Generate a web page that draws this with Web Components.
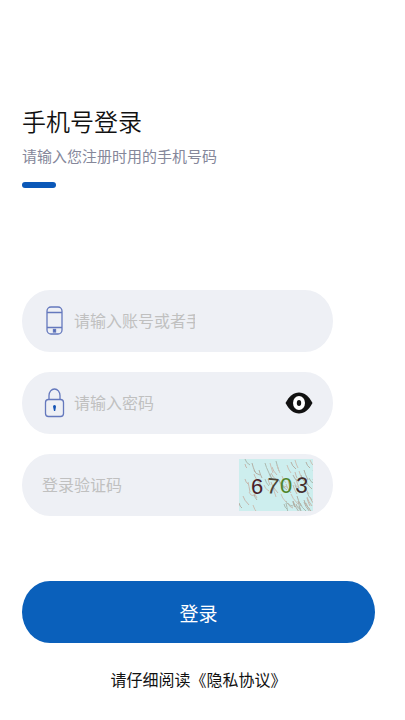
<!DOCTYPE html>
<html lang="zh-CN">
<head>
<meta charset="utf-8">
<meta name="viewport" content="width=device-width, initial-scale=1">
<title>手机号登录</title>
<style>
  body {
    margin: 0;
    background: #fff;
    color: #111;
    font-family: "Liberation Sans", "Noto Sans CJK SC", sans-serif;
    font-size: 16px;
  }
</style>
</head>
<body>
<login-page></login-page>

<script>
class LoginHeading extends HTMLElement {
  constructor() {
    super();
    const template = document.createElement('template');
    template.innerHTML = `
      <style>
        :host {
          display: block;
        }

        h1 {
          margin: 0;
          font-size: 24px;
          line-height: 36px;
          font-weight: 350;
        }

        p {
          margin: 0;
          color: #85879a;
          font-size: 15px;
          line-height: 32px;
        }

        .bar {
          width: 34px;
          height: 6px;
          margin-top: 9px;
          border-radius: 3px;
          background: #0b58b8;
        }
      </style>
      <h1><slot></slot></h1>
      <p><slot name="hint"></slot></p>
      <div class="bar"></div>
    `;
    this.attachShadow({ mode: 'open' });
    this.shadowRoot.appendChild(template.content.cloneNode(true));
  }
}

class LoginField extends HTMLElement {
  constructor() {
    super();
    const template = document.createElement('template');
    template.innerHTML = `
      <style>
        :host {
          display: flex;
          align-items: center;
          justify-content: space-between;
          height: 62px;
          padding: 0 20px;
          border-radius: 28px / 31px;
          background: #eef0f5;
        }

        label {
          display: flex;
          align-items: center;
        }

        input {
          width: 121px;
          height: 32px;
          padding: 2px 0 0;
          border: 0;
          outline: none;
          background: none;
          color: #111;
          font: inherit;
        }

        input::placeholder {
          color: #c0c0c0;
          opacity: 1;
        }
      </style>
      <label><slot name="icon"></slot><input></label>
      <slot name="action"></slot>
    `;
    this.attachShadow({ mode: 'open' });
    this.shadowRoot.appendChild(template.content.cloneNode(true));
  }

  connectedCallback() {
    const input = this.shadowRoot.querySelector('input');
    input.type = this.getAttribute('type') || 'text';
    input.placeholder = this.getAttribute('placeholder') || '';
    input.setAttribute('aria-label', input.placeholder);
  }

  toggleType() {
    const input = this.shadowRoot.querySelector('input');
    input.type = input.type === 'password' ? 'text' : 'password';
  }
}

const icons = {
  phone: `
    <rect x="5" y="2" width="15" height="27" rx="4"/>
    <path d="M5 7.5H20M5 22.5H20"/>
    <rect x="11.5" y="24.5" width="2" height="2.5" fill="#1c4ca8"/>
  `,
  lock: `
    <path d="M7 12.5V8.5a5.5 6.5 0 0 1 11 0v4"/>
    <rect x="3.5" y="12.5" width="18" height="17" rx="3"/>
    <path d="M11 19.5a1.5 1.5 0 0 1 3 0l-.8 4.5h-1.2z" fill="#1453b5" stroke="none"/>
  `
};

class FieldIcon extends HTMLElement {
  constructor() {
    super();
    this.attachShadow({ mode: 'open' });
  }

  connectedCallback() {
    this.shadowRoot.innerHTML = `
      <style>
        :host {
          display: block;
          width: 32px;
          height: 32px;
        }

        svg {
          display: block;
          fill: none;
          stroke: #6478bd;
          stroke-width: 1.3;
        }
      </style>
      <svg width="32" height="32" viewBox="0 0 32 32" aria-hidden="true">
        ${icons[this.getAttribute('name')]}
      </svg>
    `;
  }
}

class EyeToggle extends HTMLElement {
  constructor() {
    super();
    const template = document.createElement('template');
    template.innerHTML = `
      <style>
        :host {
          display: block;
        }

        button {
          display: block;
          padding: 0;
          border: 0;
          background: none;
          cursor: pointer;
        }

        svg {
          display: block;
        }
      </style>
      <button type="button" aria-label="显示密码">
        <svg width="28" height="24" viewBox="0 0 28 24">
          <path d="M.5 12C4 5.500 8.500 1.500 14 1.500S24 5.500 27.500 12C24 18.500 19.500 22.500 14 22.500S4 18.500 .5 12z" fill="#111"/>
          <ellipse cx="14" cy="12" rx="6" ry="7" fill="#fff"/>
          <ellipse cx="14" cy="12" rx="2.2" ry="3" fill="#111"/>
        </svg>
      </button>
    `;
    this.attachShadow({ mode: 'open' });
    this.shadowRoot.appendChild(template.content.cloneNode(true));
  }

  connectedCallback() {
    this.shadowRoot.querySelector('button').addEventListener('click', () => {
      this.closest('login-field').toggleType();
    });
  }
}

class CaptchaImage extends HTMLElement {
  constructor() {
    super();
    // slanted scratches scattered behind the digits, same seed every time
    let noise = '';
    let seed = 7;
    const random = () => {
      seed = (seed * 16807) % 2147483647;
      return seed / 2147483647;
    };
    const colors = ['#b3b0a5', '#c6b8ae', '#abbab0', '#cbc0b5'];
    for (let i = 0; i < 75; i++) {
      const x = Math.round(random() * 74);
      const y = Math.round(random() * 48);
      const dx = 2 + Math.round(random() * 5);
      const dy = 4 + Math.round(random() * 7);
      noise += `<path d="M${x} ${y}q1 4 ${dx} ${dy}" stroke="${colors[i % 4]}"/>`;
    }
    const template = document.createElement('template');
    template.innerHTML = `
      <style>
        :host {
          display: block;
        }

        button {
          display: block;
          padding: 0;
          border: 0;
          background: none;
          cursor: pointer;
        }

        svg {
          display: block;
          background: #cdeeee;
        }

        text {
          font-family: "Liberation Sans", sans-serif;
          font-size: 22px;
        }
      </style>
      <button type="button" aria-label="刷新验证码">
        <svg width="74" height="52" viewBox="0 0 74 52">
          <g fill="none" stroke-width="1">${noise}</g>
          <text x="12" y="35" fill="#4b2028">6</text>
          <text x="27" y="34" rotate="6" fill="#4c4436">7</text>
          <text x="41" y="34" fill="#4f8428">0</text>
          <text x="56" y="33" rotate="6" fill="#432b2b">3</text>
        </svg>
      </button>
    `;
    this.attachShadow({ mode: 'open' });
    this.shadowRoot.appendChild(template.content.cloneNode(true));
  }
}

class LoginButton extends HTMLElement {
  constructor() {
    super();
    const template = document.createElement('template');
    template.innerHTML = `
      <style>
        :host {
          display: block;
        }

        button {
          display: block;
          width: 100%;
          height: 62px;
          padding: 0;
          border: 0;
          border-radius: 28px / 31px;
          background: #0a60bb;
          color: #fff;
          font: inherit;
          font-size: 19px;
          cursor: pointer;
        }
      </style>
      <button type="button"><slot></slot></button>
    `;
    this.attachShadow({ mode: 'open' });
    this.shadowRoot.appendChild(template.content.cloneNode(true));
  }
}

class LoginPage extends HTMLElement {
  constructor() {
    super();
    const template = document.createElement('template');
    template.innerHTML = `
      <style>
        :host {
          display: block;
          padding: 105px 30px 24px 22px;
        }

        .fields {
          display: grid;
          gap: 20px;
          margin: 102px 42px 65px 0;
        }

        .agreement {
          margin: 26px 0 0;
          line-height: 24px;
          text-align: center;
        }

        a {
          color: inherit;
          text-decoration: none;
        }
      </style>
      <login-heading>手机号登录<span slot="hint">请输入您注册时用的手机号码</span></login-heading>
      <div class="fields">
        <login-field placeholder="请输入账号或者手机号">
          <field-icon slot="icon" name="phone"></field-icon>
        </login-field>
        <login-field type="password" placeholder="请输入密码">
          <field-icon slot="icon" name="lock"></field-icon>
          <eye-toggle slot="action"></eye-toggle>
        </login-field>
        <login-field placeholder="登录验证码">
          <captcha-image slot="action"></captcha-image>
        </login-field>
      </div>
      <login-button>登录</login-button>
      <p class="agreement">请仔细阅读<a href="#privacy">《隐私协议》</a></p>
    `;
    this.attachShadow({ mode: 'open' });
    this.shadowRoot.appendChild(template.content.cloneNode(true));
  }
}

customElements.define('login-heading', LoginHeading);
customElements.define('field-icon', FieldIcon);
customElements.define('eye-toggle', EyeToggle);
customElements.define('captcha-image', CaptchaImage);
customElements.define('login-field', LoginField);
customElements.define('login-button', LoginButton);
customElements.define('login-page', LoginPage);
</script>
</body>
</html>
